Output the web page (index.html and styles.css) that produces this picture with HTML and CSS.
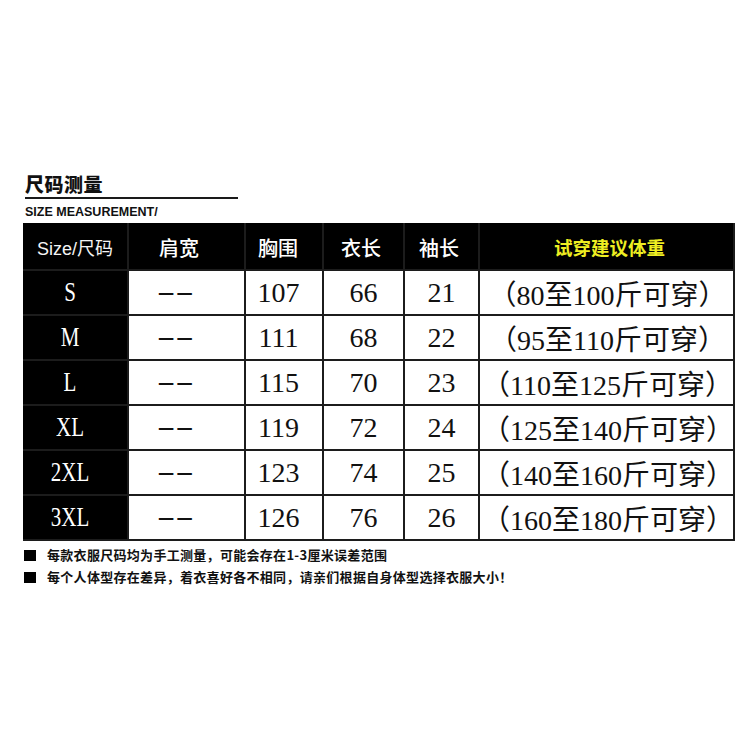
FILE: index.html
```html
<!DOCTYPE html>
<html lang="zh-CN">
<head>
<meta charset="utf-8">
<title>尺码测量</title>
<link rel="stylesheet" href="styles.css">
</head>
<body>
<div class="page">
  <div class="heading">
    <h1 class="title">尺码测量</h1>
    <div class="rule"></div>
    <div class="subtitle">SIZE MEASUREMENT/</div>
  </div>

  <div class="table">
    <div class="th th-size">Size/尺码</div>
    <div class="th th-shoulder">肩宽</div>
    <div class="th th-chest">胸围</div>
    <div class="th">衣长</div>
    <div class="th">袖长</div>
    <div class="th th-weight">试穿建议体重</div>

    <div class="size"><span>S</span></div>
    <div class="td dash"><span>--</span></div>
    <div class="td chest">107</div>
    <div class="td">66</div>
    <div class="td">21</div>
    <div class="td wt">（80至100斤可穿）</div>

    <div class="size"><span>M</span></div>
    <div class="td dash"><span>--</span></div>
    <div class="td chest">111</div>
    <div class="td">68</div>
    <div class="td">22</div>
    <div class="td wt">（95至110斤可穿）</div>

    <div class="size"><span>L</span></div>
    <div class="td dash"><span>--</span></div>
    <div class="td chest">115</div>
    <div class="td">70</div>
    <div class="td">23</div>
    <div class="td wt">（110至125斤可穿）</div>

    <div class="size"><span>XL</span></div>
    <div class="td dash"><span>--</span></div>
    <div class="td chest">119</div>
    <div class="td">72</div>
    <div class="td">24</div>
    <div class="td wt">（125至140斤可穿）</div>

    <div class="size"><span>2XL</span></div>
    <div class="td dash"><span>--</span></div>
    <div class="td chest">123</div>
    <div class="td">74</div>
    <div class="td">25</div>
    <div class="td wt">（140至160斤可穿）</div>

    <div class="size"><span>3XL</span></div>
    <div class="td dash"><span>--</span></div>
    <div class="td chest">126</div>
    <div class="td">76</div>
    <div class="td">26</div>
    <div class="td wt">（160至180斤可穿）</div>
  </div>

  <ul class="notes">
    <li><span class="bullet"></span>每款衣服尺码均为手工测量，可能会存在1-3厘米误差范围</li>
    <li><span class="bullet"></span>每个人体型存在差异，着衣喜好各不相同，请亲们根据自身体型选择衣服大小！</li>
  </ul>
</div>
</body>
</html>
```

FILE: styles.css
```css
html, body {
  margin: 0;
  padding: 0;
  background: #ffffff;
}

.page {
  width: 750px;
  height: 750px;
  box-sizing: border-box;
  padding-top: 173px;
  font-family: "Liberation Sans", "Noto Sans CJK SC", sans-serif;
  color: #111;
}

.heading {
  padding-left: 25px;
}

.title {
  margin: 0;
  font-family: "Noto Sans CJK SC", sans-serif;
  font-size: 19px;
  font-weight: 900;
  line-height: 22px;
  letter-spacing: 0.5px;
  color: #111;
}

.rule {
  width: 213px;
  height: 2px;
  background: #1a1a1a;
  margin-top: 2px;
}

.subtitle {
  font-family: "Liberation Sans", sans-serif;
  font-weight: 700;
  font-size: 12.5px;
  line-height: 14px;
  margin-top: 6px;
  color: #111;
  height: 18px;
}

.table {
  margin-left: 23px;
  width: 712px;
  box-sizing: border-box;
  display: grid;
  grid-template-columns: 104px 115px 76px 79px 73px 253px;
  grid-template-rows: 46px repeat(6, 43px);
  gap: 2px;
  padding: 0 2px 2px 0;
  background: #1c1c1c;
}

.th {
  background: #000;
  color: #fff;
  display: flex;
  align-items: center;
  justify-content: center;
  font-family: "Noto Sans CJK SC", sans-serif;
  font-size: 20px;
  font-weight: 500;
  padding-right: 5px;
  padding-top: 2px;
}

.th-size {
  font-family: "Liberation Sans", "Noto Sans CJK SC", sans-serif;
  font-size: 18px;
  font-weight: 400;
  padding-right: 0;
  color: #f4f4f4;
}

.th-shoulder {
  padding-right: 15px;
}

.th-chest {
  padding-right: 12px;
}

.th-weight {
  color: #eeee22;
  font-size: 18.5px;
  font-weight: 700;
  padding-right: 0;
  padding-left: 6px;
}

.size {
  background: #000;
  color: #fff;
  display: flex;
  align-items: center;
  justify-content: center;
  padding-right: 10px;
  font-family: "Liberation Serif", serif;
  font-size: 21px;
}

.size span {
  display: inline-block;
  transform: scaleY(1.35);
}

.td {
  background: #fff;
  color: #111;
  display: flex;
  align-items: center;
  justify-content: center;
  font-family: "Liberation Serif", "Noto Sans CJK SC", serif;
  font-size: 28px;
}

.chest {
  padding-right: 11px;
}

.dash {
  padding-right: 22px;
  padding-bottom: 3px;
}

.dash span {
  display: inline-block;
  transform: scaleX(2);
}

.wt {
  font-size: 28px;
  padding-left: 2px;
}

.notes {
  list-style: none;
  margin: 3px 0 0 0;
  padding: 0 0 0 24px;
  font-family: "Noto Sans CJK SC", sans-serif;
  font-weight: 700;
  font-size: 13px;
  line-height: 22px;
  color: #111;
}

.notes li {
  display: flex;
  align-items: center;
  letter-spacing: 0.3px;
}

.bullet {
  width: 12px;
  height: 11px;
  background: #000;
  margin-right: 11px;
  flex: none;
}
```
